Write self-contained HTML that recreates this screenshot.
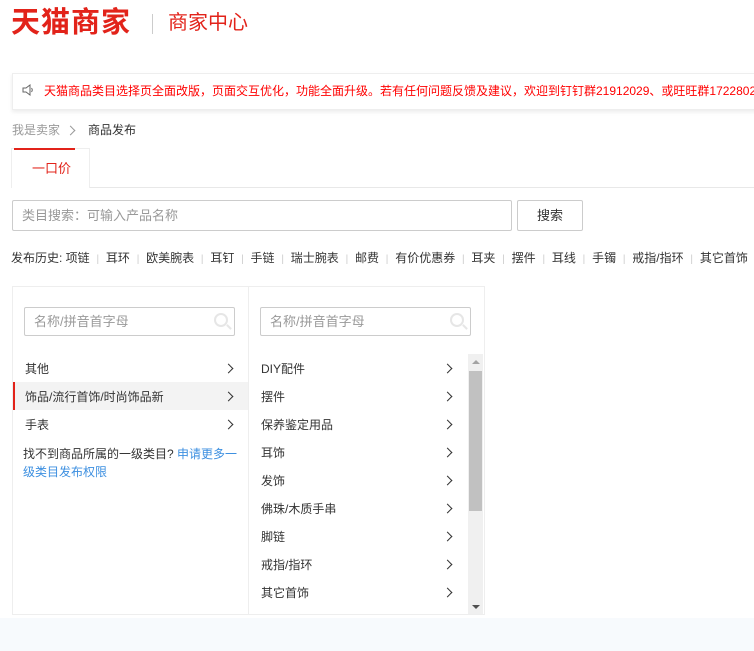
<!DOCTYPE html>
<html><head><meta charset="utf-8"><style>
*{margin:0;padding:0;box-sizing:border-box}
body{width:754px;height:651px;overflow:hidden;background:#fff;font-family:"Liberation Sans","Noto Sans CJK SC",sans-serif;font-size:12px;color:#333;position:relative}
.a{position:absolute;white-space:nowrap}
.chev{position:absolute;width:7px;height:7px;border-right:1.3px solid #333;border-top:1.3px solid #333;transform:rotate(45deg)}
.inp{position:absolute;border:1px solid #ccc;border-radius:2px;height:29px;color:#999;font-size:13px;line-height:27px;padding-left:9px}
.mag{position:absolute;right:6px;top:5px;width:14px;height:14px;border:2px solid #e6e6e6;border-radius:50%}
.mag:after{content:"";position:absolute;width:2px;height:6px;background:#e6e6e6;right:-4px;bottom:-5px;transform:rotate(-45deg)}
.s{color:#ccc;margin:0 6.8px;font-size:10px}
</style></head><body>
<div class="a" style="left:11px;top:4px;font-size:29px;font-weight:bold;color:#e2231a;letter-spacing:1px;line-height:38px">天猫商家</div>
<div class="a" style="left:152px;top:14px;width:1px;height:20px;background:#ccc"></div>
<div class="a" style="left:168px;top:10px;font-size:20px;color:#e2231a;line-height:26px">商家中心</div>

<div class="a" style="left:12px;top:73px;width:760px;height:37px;border:1px solid #eee;box-shadow:0 2px 4px rgba(0,0,0,0.08)"></div>
<svg class="a" style="left:21px;top:83px" width="14" height="14" viewBox="0 0 14 14"><path d="M2 5h3l4-3v10l-4-3H2z" fill="none" stroke="#666" stroke-width="1"/><path d="M10.5 5q1.5 2 0 4" fill="none" stroke="#666"/></svg>
<div class="a" style="left:44px;top:83px;color:#f00;font-size:12px;line-height:16px">天猫商品类目选择页全面改版，页面交互优化，功能全面升级。若有任何问题反馈及建议，欢迎到钉钉群21912029、或旺旺群1722802</div>

<div class="a" style="left:12px;top:122px;color:#999;line-height:16px">我是卖家</div>
<div class="chev" style="left:67px;top:127px;border-color:#999"></div>
<div class="a" style="left:88px;top:122px;color:#333;line-height:16px">商品发布</div>

<div class="a" style="left:12px;top:187px;width:742px;height:1px;background:#e8e8e8"></div>
<div class="a" style="left:11px;top:148px;width:79px;height:40px;border:1px solid #eee;border-bottom:none;background:#fff"></div>
<div class="a" style="left:14px;top:148px;width:61px;height:2px;background:#e2231a"></div>
<div class="a" style="left:32px;top:160px;color:#e2231a;font-size:13px;line-height:18px">一口价</div>

<div class="inp" style="left:12px;top:200px;width:500px;height:31px;line-height:29px">类目搜索：可输入产品名称</div>
<div class="a" style="left:517px;top:200px;width:66px;height:31px;border:1px solid #ccc;border-radius:2px;text-align:center;line-height:29px;font-size:13px;color:#333">搜索</div>

<div class="a" style="left:11px;top:250px;line-height:16px;color:#333">发布历史: 项链<span class="s">|</span>耳环<span class="s">|</span>欧美腕表<span class="s">|</span>耳钉<span class="s">|</span>手链<span class="s">|</span>瑞士腕表<span class="s">|</span>邮费<span class="s">|</span>有价优惠券<span class="s">|</span>耳夹<span class="s">|</span>摆件<span class="s">|</span>耳线<span class="s">|</span>手镯<span class="s">|</span>戒指/指环<span class="s">|</span>其它首饰</div>

<div class="a" style="left:12px;top:286px;width:473px;height:329px;border:1px solid #eee"></div>
<div class="a" style="left:248px;top:286px;width:1px;height:329px;background:#eee"></div>
<div class="inp" style="left:24px;top:307px;width:211px">名称/拼音首字母<div class="mag"></div></div>
<div class="inp" style="left:260px;top:307px;width:211px">名称/拼音首字母<div class="mag"></div></div>

<div class="a" style="left:13px;top:382px;width:235px;height:28px;background:#f3f3f3"></div>
<div class="a" style="left:13px;top:382px;width:2px;height:28px;background:#e2231a"></div>
<div class="a" style="left:25px;top:361px;line-height:16px">其他</div><div class="chev" style="left:225px;top:365px"></div>
<div class="a" style="left:25px;top:389px;line-height:16px">饰品/流行首饰/时尚饰品新</div><div class="chev" style="left:225px;top:393px"></div>
<div class="a" style="left:25px;top:417px;line-height:16px">手表</div><div class="chev" style="left:225px;top:421px"></div>
<div class="a" style="left:23px;top:445px;line-height:18px;white-space:normal;width:216px">找不到商品所属的一级类目? <span style="color:#3c8fe0">申请更多一级类目发布权限</span></div>

<div class="a" style="left:468px;top:354px;width:15px;height:260px;background:#f0f0f0"></div>
<div class="a" style="left:469px;top:371px;width:13px;height:140px;background:#c1c1c1"></div>
<div class="a" style="left:472px;top:360px;border:4px solid transparent;border-bottom-color:#a3a3a3;border-top:none"></div>
<div class="a" style="left:472px;top:605px;border:4px solid transparent;border-top-color:#505050;border-bottom:none"></div>

<div class="a" style="left:261px;top:361px;line-height:16px">DIY配件</div><div class="chev" style="left:444px;top:365px"></div>
<div class="a" style="left:261px;top:389px;line-height:16px">摆件</div><div class="chev" style="left:444px;top:393px"></div>
<div class="a" style="left:261px;top:417px;line-height:16px">保养鉴定用品</div><div class="chev" style="left:444px;top:421px"></div>
<div class="a" style="left:261px;top:445px;line-height:16px">耳饰</div><div class="chev" style="left:444px;top:449px"></div>
<div class="a" style="left:261px;top:473px;line-height:16px">发饰</div><div class="chev" style="left:444px;top:477px"></div>
<div class="a" style="left:261px;top:501px;line-height:16px">佛珠/木质手串</div><div class="chev" style="left:444px;top:505px"></div>
<div class="a" style="left:261px;top:529px;line-height:16px">脚链</div><div class="chev" style="left:444px;top:533px"></div>
<div class="a" style="left:261px;top:557px;line-height:16px">戒指/指环</div><div class="chev" style="left:444px;top:561px"></div>
<div class="a" style="left:261px;top:585px;line-height:16px">其它首饰</div><div class="chev" style="left:444px;top:589px"></div>

<div class="a" style="left:0;top:618px;width:754px;height:33px;background:#f7fafd"></div>
</body></html>
